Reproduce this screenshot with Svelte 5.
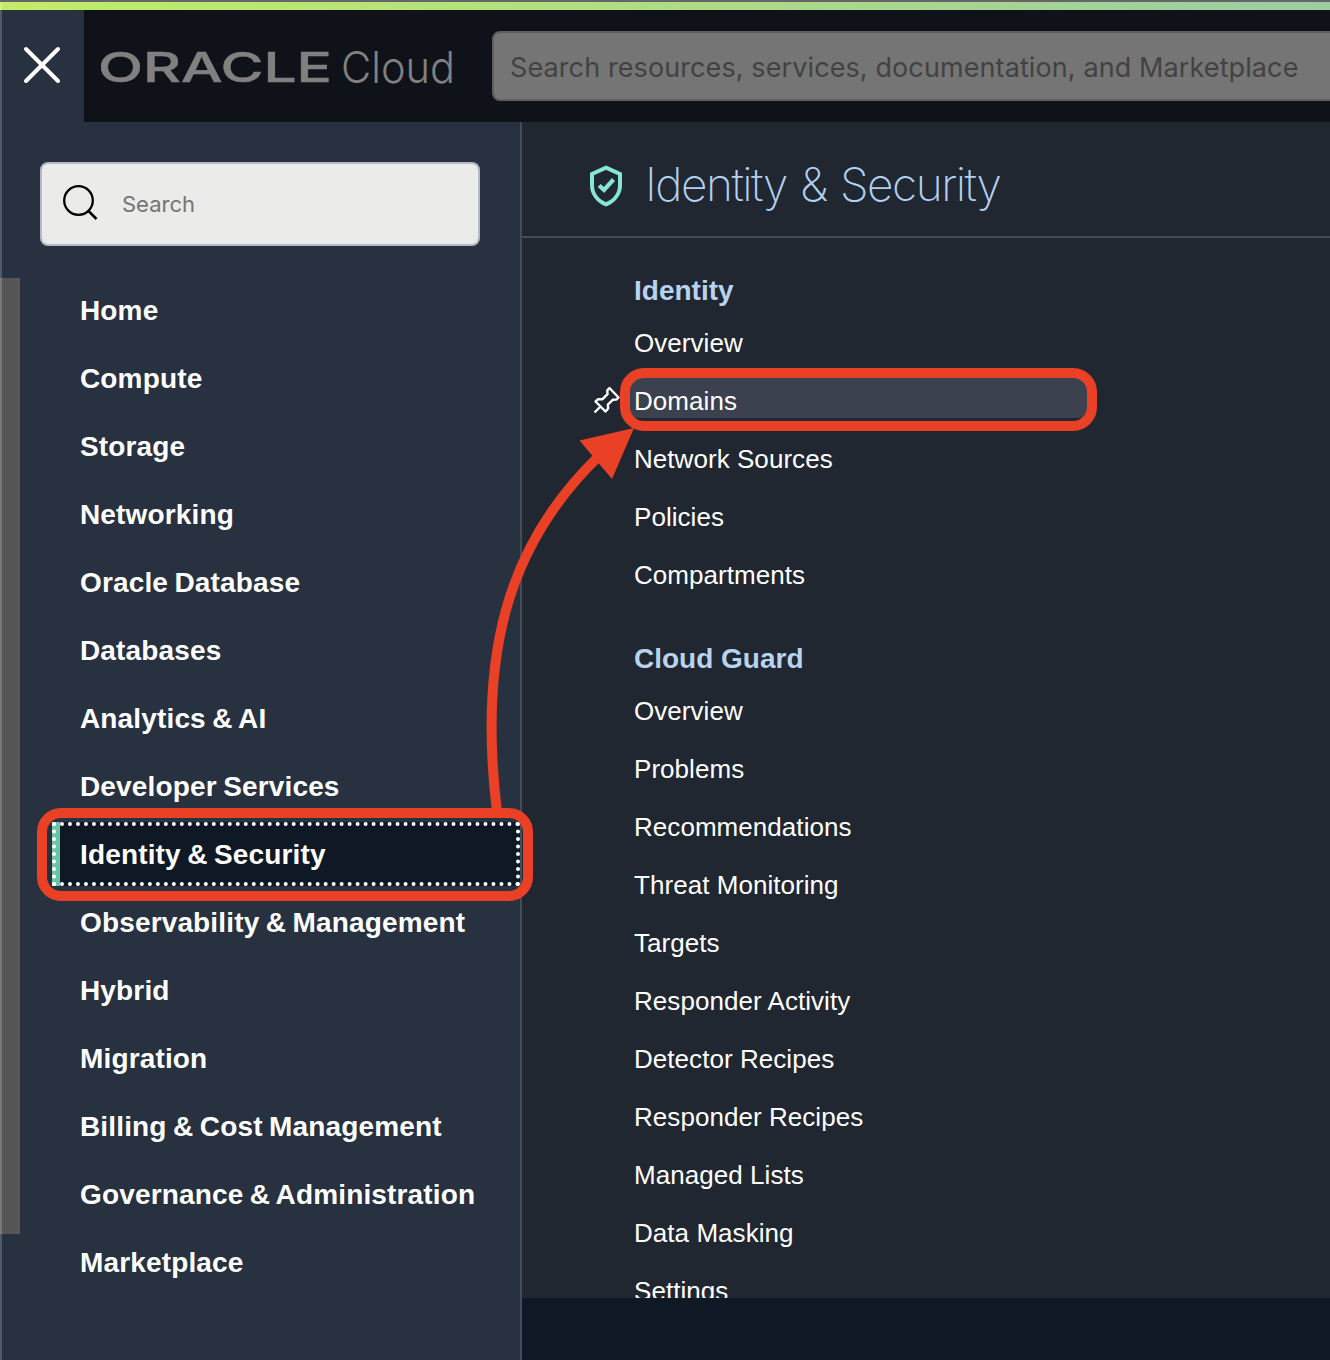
<script>
  const menu = [
    'Home', 'Compute', 'Storage', 'Networking', 'Oracle Database', 'Databases',
    'Analytics & AI', 'Developer Services', 'Identity & Security',
    'Observability & Management', 'Hybrid', 'Migration',
    'Billing & Cost Management', 'Governance & Administration', 'Marketplace'
  ];
  const active = 'Identity & Security';
  const groups = [
    { title: 'Identity', links: ['Overview', 'Domains', 'Network Sources', 'Policies', 'Compartments'] },
    {
      title: 'Cloud Guard',
      links: [
        'Overview', 'Problems', 'Recommendations', 'Threat Monitoring', 'Targets',
        'Responder Activity', 'Detector Recipes', 'Responder Recipes',
        'Managed Lists', 'Data Masking', 'Settings'
      ]
    }
  ];
</script>

<div class="screen">
  <div class="stripe"></div>
  <header>
    <button class="close" aria-label="Close menu">
      <svg width="40" height="40" viewBox="0 0 40 40">
        <path d="M4 4 36 36M36 4 4 36" fill="none" stroke="#fff" stroke-width="4" stroke-linecap="round" />
      </svg>
    </button>
    <svg class="brand" width="360" height="60" viewBox="0 0 360 60">
      <text class="oracle" x="-2" y="46" textLength="234" lengthAdjust="spacingAndGlyphs">ORACLE</text>
      <text class="cloud" x="241" y="46.500" textLength="114" lengthAdjust="spacingAndGlyphs">Cloud</text>
    </svg>
    <div class="global-search"><span>Search resources, services, documentation, and Marketplace</span></div>
  </header>

  <div class="body">
    <aside>
      <div class="menu-search">
        <svg width="40" height="40" viewBox="0 0 40 40">
          <circle cx="16.500" cy="16.500" r="14.300" fill="none" stroke="#000" stroke-width="2.300" />
          <path d="M26 26.500 34.500 35" fill="none" stroke="#000" stroke-width="2.500" />
        </svg>
        <span>Search</span>
      </div>
      <nav>
        {#each menu as item}
          <div class="item" class:active={item === active}>{item}</div>
        {/each}
      </nav>
    </aside>

    <main>
      <div class="heading">
        <svg class="shield" width="34" height="42" viewBox="0 0 34 42">
          <path d="M17 2.600 31 9V20C31 29 25 36 17 39.400 9 36 3 29 3 20V9Z" fill="none" stroke="#86e5d4" stroke-width="4" stroke-linejoin="miter" />
          <path d="M10.200 20.500 15 25 24.500 14.500" fill="none" stroke="#86e5d4" stroke-width="4.200" />
        </svg>
        <h1>Identity &amp; Security</h1>
      </div>
      <div class="links">
        {#each groups as group}
          <section>
            <h2>{group.title}</h2>
            {#each group.links as link}
              <div class="link" class:hover={link === 'Domains'}>
                {#if link === 'Domains'}
                  <svg class="pin" width="28" height="28" viewBox="0 0 28 28">
                    <path d="M16.500 2 25.500 11.500 23.500 13.500 20 13.700 14.800 18.700 15.200 22.500 12.500 25.500 2.500 15.500 5.200 13.200 9.500 13.200 14.500 8.200 14.300 4.300ZM7.500 20.500 1.500 26.500" fill="none" stroke="#fff" stroke-width="2.400" stroke-linejoin="round" />
                  </svg>
                {/if}
                <span>{link}</span>
              </div>
            {/each}
          </section>
        {/each}
      </div>
      <div class="bottom"></div>
    </main>
  </div>

  <div class="window-edge"></div>
  <div class="scroll-thumb"></div>
  <!-- Annotations drawn over the menu -->
  <svg class="notes" width="1330" height="1360" viewBox="0 0 1330 1360">
    <g fill="none" stroke="#ea4025" stroke-width="10">
      <rect x="625" y="373" width="467" height="53" rx="19" />
      <rect x="42" y="813" width="486" height="83" rx="19" />
      <path d="M497 812C478 655 507 545 599 456" />
    </g>
    <path d="M634 428 579.500 440.500 612 479Z" fill="#ea4025" />
  </svg>
</div>

<style>
  :global(body) { margin: 0; background: #0f1825; }
  .screen {
    position: relative;
    width: 1330px;
    height: 1360px;
    overflow: hidden;
    display: flex;
    flex-direction: column;
    font-family: "Liberation Sans", Arial, sans-serif;
    color: #fff;
  }
  .stripe {
    box-sizing: border-box;
    height: 10px;
    border-top: 2px solid #646569;
    background: linear-gradient(90deg, #c2ec66, #9ccda2);
    flex: none;
  }
  header { display: flex; height: 112px; background: #0f1219; flex: none; }
  .close {
    width: 84px;
    border: 0;
    padding: 0 0 2px;
    background: #283140;
    display: flex;
    align-items: center;
    justify-content: center;
    flex: none;
  }
  .brand { margin: 26px 32px 0 16px; flex: none; overflow: visible; }
  .oracle { font: 500 41px Inter, sans-serif; fill: #808080; stroke: #808080; stroke-width: 0.5px; }
  .cloud { font: 300 44px Inter, sans-serif; fill: #808080; }
  .global-search {
    box-sizing: border-box;
    width: 900px;
    height: 70px;
    margin-top: 21px;
    border: 2px solid #5d5f63;
    border-radius: 8px;
    background: #757575;
    color: #424242;
    font: 400 27px/70px Inter, sans-serif;
    letter-spacing: 0.1px;
    padding-left: 16px;
    flex: none;
    white-space: nowrap;
  }
  .body { display: flex; flex: 1; min-height: 0; }
  aside {
    box-sizing: border-box;
    width: 522px;
    padding-top: 40px;
    background: #283140;
    border-right: 2px solid #434d59;
    flex: none;
  }
  .menu-search {
    box-sizing: border-box;
    width: 440px;
    height: 84px;
    margin-left: 40px;
    padding-left: 20px;
    border: 2px solid #b3b9c2;
    border-radius: 8px;
    background: #ebebe9;
    color: #757575;
    display: flex;
    align-items: center;
    gap: 20px;
    font: 400 22px Inter, sans-serif;
  }
  nav { padding: 32px 0 0 52px; }
  .item {
    box-sizing: border-box;
    height: 64px;
    margin-bottom: 4px;
    padding-left: 28px;
    font-size: 28px;
    font-weight: 700;
    line-height: 66px;
    letter-spacing: 0.15px;
    word-spacing: -1.5px;
    white-space: nowrap;
  }
  .item.active {
    padding-left: 24px;
    border: 4px dotted #fff;
    line-height: 58px;
    background: linear-gradient(90deg, #6cc5a8 8px, #0f1825 8px) border-box;
  }
  main { flex: 1; min-width: 0; display: flex; flex-direction: column; background: #202731; }
  .heading {
    box-sizing: border-box;
    height: 116px;
    padding: 0 0 0 67px;
    display: flex;
    align-items: center;
    gap: 22px;
    border-bottom: 2px solid #434c59;
    flex: none;
  }
  .shield { margin-top: 14px; }
  h1 { margin: 10px 0 0; font: 200 46px/60px Inter, sans-serif; letter-spacing: -1.5px; word-spacing: 2px; color: #b3d0f0; white-space: nowrap; }
  .links { flex: 1; min-height: 0; overflow: hidden; padding: 33px 0 0 106px; }
  section { margin-bottom: 47px; }
  h2 { margin: 0 0 5px 6px; font-size: 28px; line-height: 40px; font-weight: 700; color: #b8d3ef; }
  .link {
    position: relative;
    width: 460px;
    height: 44px;
    margin-bottom: 14px;
    padding-left: 6px;
    box-sizing: border-box;
    font-size: 26px;
    line-height: 55px;
    letter-spacing: 0.05px;
    white-space: nowrap;
  }
  .link.hover { background: #3b414e; }
  .pin { position: absolute; left: -35px; top: 12px; }
  .bottom { height: 62px; background: #0f1825; flex: none; }
  .window-edge { position: absolute; left: 0; top: 2px; bottom: 0; width: 2px; background: rgba(255, 255, 255, 0.2); }
  .scroll-thumb { position: absolute; left: 0; top: 278px; width: 20px; height: 956px; background: #565656; border-left: 2px solid #777; box-sizing: border-box; }
  .notes { position: absolute; left: 0; top: 0; pointer-events: none; }
</style>
